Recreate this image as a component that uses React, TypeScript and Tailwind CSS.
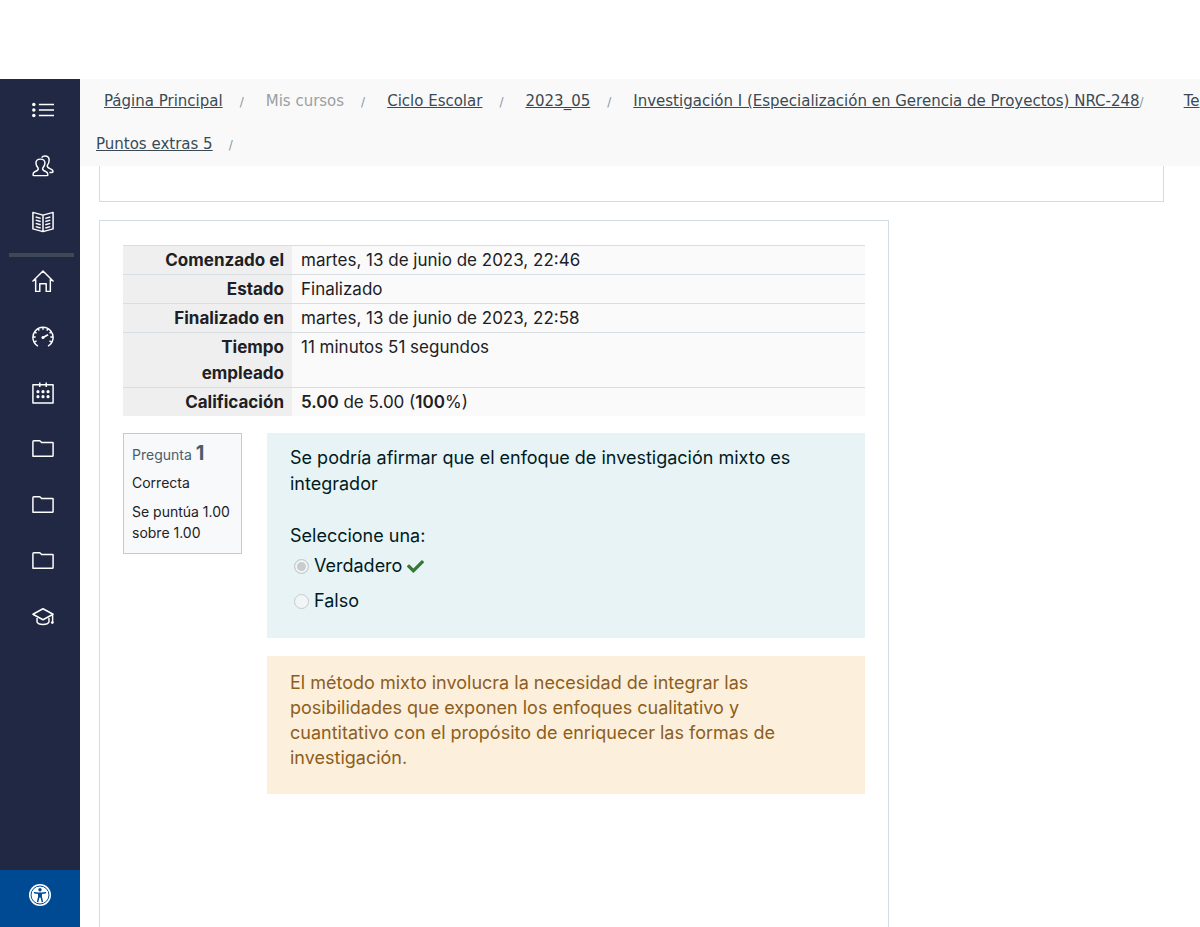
import type { ReactNode } from 'react';
import { FaCheck } from 'react-icons/fa';

interface NavItem {
  label: string;
  icon: ReactNode;
}

const folder = <path d="M1 20V4q0-1 1-1h6.500l2 2H22.500q.5 0 .5.500V19q0 1-1 1H2q-1 0-1-1Z" />;

const courseNav: NavItem[] = [
  {
    label: 'Secciones',
    icon: (
      <>
        <path d="M7.500 6H24M7.500 12H24M7.500 18H24" />
        <g fill="currentColor" stroke="none">
          <circle cx="2" cy="6" r="1.900" />
          <circle cx="2" cy="12" r="1.900" />
          <circle cx="2" cy="18" r="1.900" />
        </g>
      </>
    ),
  },
  {
    label: 'Participantes',
    icon: (
      <>
        <path d="M6.800 14.500C4.500 12 4.300 10.500 4.300 8.800C4.300 6 6.500 4.500 9.200 4.500S14.100 6 14.100 8.800C14.100 10.500 13.900 12 11.600 14.500C11.200 16.500 12.500 17 15 18C17 18.800 17.300 20 17.300 21.500Q17.300 22.500 16.300 22.500H2.100Q1.100 22.500 1.100 21.500C1.100 20 1.400 18.800 3.400 18C5.900 17 7.200 16.500 6.800 14.500Z" />
        <path d="M10.500 2.800C11.300 1.700 12.600 1.200 14 1.200C16.700 1.200 18.700 2.800 18.700 5.500C18.700 7.800 18.300 9.300 16.700 11.300C16.200 13.500 17.300 14 19.500 14.900C22 15.900 22.900 16.700 22.900 18Q22.900 19 21.900 19H19" />
      </>
    ),
  },
  {
    label: 'Calificaciones',
    icon: (
      <>
        <path d="M1 1.500L12 4.500L23 1.500V19.500L12 22.500L1 19.500ZM12 4.500V22.500" />
        <path d="M4 6.500L9.500 8M4 10L9.500 11.500M4 13.500L9.500 15M4 17L9.500 18.500M20 6.500L14.500 8M20 10L14.500 11.500M20 13.500L14.500 15M20 17L14.500 18.500" />
      </>
    ),
  },
];

const siteNav: NavItem[] = [
  {
    label: 'Página Principal',
    icon: <path d="M.5 12.500L12 1L23.500 12.500M4 10V23.500H8.500V15H15.500V23.500H20V10" />,
  },
  {
    label: 'Tablero',
    icon: (
      <>
        <path d="M6.500 22A11 11 0 1 1 17.500 22" />
        <path d="M12 1V4M6.500 2.500L7.800 5M17.500 2.500L16.200 5M2.500 6.500L5 7.800M21.500 6.500L19 7.800M1 12H4M23 12H20M2.500 17.500L5 16.200M21.500 17.500L19 16.200" />
        <path d="M12 12.500L17.500 9.500" strokeWidth="2" />
        <circle cx="12" cy="12.500" r="1.700" fill="currentColor" stroke="none" />
      </>
    ),
  },
  {
    label: 'Calendario',
    icon: (
      <>
        <path d="M1 3H23V23H1ZM8.500 .5V5.500M15.500 .5V5.500" />
        <g fill="currentColor" stroke="none">
          <circle cx="6.500" cy="10.500" r="1.700" />
          <circle cx="12" cy="10.500" r="1.700" />
          <circle cx="17.500" cy="10.500" r="1.700" />
          <circle cx="6.500" cy="16" r="1.700" />
          <circle cx="12" cy="16" r="1.700" />
          <circle cx="17.500" cy="16" r="1.700" />
        </g>
      </>
    ),
  },
  { label: 'Archivos privados', icon: folder },
  { label: 'Banco de contenido', icon: folder },
  { label: 'Documentos', icon: folder },
  {
    label: 'Mis cursos',
    icon: (
      <>
        <path d="M12 3L23 9L12 15L1 9ZM5.500 11.500V17.500C7 21 17 21 18.500 17.500V11.500M22.500 9.500V17.500" />
        <circle cx="22.200" cy="18" r="1.500" fill="currentColor" stroke="none" />
      </>
    ),
  },
];

const crumbs = [
  { label: 'Página Principal', href: '#inicio' },
  { label: 'Mis cursos' },
  { label: 'Ciclo Escolar', href: '#ciclo' },
  { label: '2023_05', href: '#periodo' },
  { label: 'Investigación I (Especialización en Gerencia de Proyectos) NRC-248', href: '#curso', tight: true },
];

const summary: { label: string; value: ReactNode }[] = [
  { label: 'Comenzado el', value: 'martes, 13 de junio de 2023, 22:46' },
  { label: 'Estado', value: 'Finalizado' },
  { label: 'Finalizado en', value: 'martes, 13 de junio de 2023, 22:58' },
  { label: 'Tiempo empleado', value: '11 minutos 51 segundos' },
  {
    label: 'Calificación',
    value: (
      <>
        <b className="font-semibold">5.00</b> de 5.00 (<b className="font-semibold">100</b>%)
      </>
    ),
  },
];

function NavList({ items }: { items: NavItem[] }) {
  return (
    <ul className="flex flex-col gap-[34px]">
      {items.map((item, i) => (
        <li key={i} className="flex justify-center pl-[6px]">
          <a href="#nav" aria-label={item.label} className="block text-white">
            <svg
              viewBox="0 0 24 24"
              className="w-[22px] h-[22px]"
              fill="none"
              stroke="currentColor"
              strokeWidth="1.600"
              strokeLinejoin="round"
            >
              {item.icon}
            </svg>
          </a>
        </li>
      ))}
    </ul>
  );
}

function Sidebar() {
  return (
    <aside className="w-20 shrink-0 bg-[#212844] flex flex-col justify-between">
      <nav className="pt-5">
        <NavList items={courseNav} />
        <hr className="mt-5 mb-[13px] ml-[9px] mr-[6px] h-1 border-0 bg-[#3b4a54]" />
        <NavList items={siteNav} />
      </nav>
      <button type="button" aria-label="Accesibilidad" className="h-[57px] pb-2 bg-[#004a93] flex items-center justify-center">
        <svg viewBox="0 0 24 24" className="w-6 h-6">
          <circle cx="12" cy="12" r="11" fill="#fff" />
          <circle cx="12" cy="12" r="9" fill="none" stroke="#004a93" strokeWidth="1" />
          <circle cx="12" cy="6.800" r="1.700" fill="#004a93" />
          <path
            d="M6.500 9.700L10.500 10.300H13.500L17.500 9.700M12 10V14M10.800 10.500V14L9.700 18.500M13.200 10.500V14L14.300 18.500"
            fill="none"
            stroke="#004a93"
            strokeWidth="1.500"
            strokeLinecap="round"
          />
        </svg>
      </button>
    </aside>
  );
}

function Slash() {
  return (
    <span aria-hidden="true" className="text-xs text-[#8b979e]">
      /
    </span>
  );
}

function Breadcrumb() {
  return (
    <nav
      aria-label="Ruta"
      className="bg-[#f9f9f9] pt-[9px] pb-[9px] overflow-hidden whitespace-nowrap font-['DejaVu_Sans',Verdana,sans-serif] text-[15px] leading-[26px] text-[#3a4a54]"
    >
      <ol className="flex items-baseline pl-6">
        {crumbs.map((crumb) => (
          <li key={crumb.label} className={crumb.tight ? 'flex items-baseline pr-10' : 'flex items-baseline gap-[17px] pr-[22px]'}>
            {crumb.href ? (
              <a href={crumb.href} className="underline">
                {crumb.label}
              </a>
            ) : (
              <span className="text-[#9b9fa2]">{crumb.label}</span>
            )}
            <Slash />
          </li>
        ))}
        <li>
          <a href="#tema" className="underline">
            Te
          </a>
        </li>
      </ol>
      <div className="flex items-baseline gap-4 pl-4 mt-[17px]">
        <a href="#puntos" className="underline">
          Puntos extras 5
        </a>
        <Slash />
      </div>
    </nav>
  );
}

function AttemptSummary() {
  return (
    <table className="w-full bg-[#fafafa] leading-[26px]">
      <tbody>
        {summary.map((row) => (
          <tr key={row.label} className="border-t border-[#d9dee3] align-top">
            <th scope="row" className="w-[169px] bg-[#efefef] pl-8 pr-2 py-px text-right font-bold">
              {row.label}
            </th>
            <td className="px-[9px] py-px">{row.value}</td>
          </tr>
        ))}
      </tbody>
    </table>
  );
}

function QuestionInfo() {
  return (
    <div className="w-[119px] shrink-0 self-start border border-[#c3cad2] bg-[#f8f9fb] px-2 pt-[5px] pb-[10px] text-sm leading-[21px]">
      <h3 className="text-[#495e6a] leading-[26px]">
        Pregunta <span className="text-xl font-bold">1</span>
      </h3>
      <div className="mt-1">Correcta</div>
      <div className="mt-2">Se puntúa 1.00 sobre 1.00</div>
    </div>
  );
}

function Option({ label, checked = false }: { label: string; checked?: boolean }) {
  return (
    <label className="flex items-center gap-[5px] pl-1">
      <input
        type="radio"
        name="respuesta"
        disabled
        defaultChecked={checked}
        className="appearance-none w-[15px] h-[15px] rounded-full border border-[#c6cacb] bg-[#f1f5f5] checked:bg-[#c9cccd] checked:shadow-[inset_0_0_0_2px_#f1f5f5]"
      />
      {label}
      {checked && <FaCheck size={17} className="text-[#357a32]" />}
    </label>
  );
}

export default function App() {
  return (
    <div className="min-h-screen bg-white pt-[79px] flex flex-col font-['Inter',sans-serif] text-[17px] text-[#1d2125]">
      <div className="flex-1 flex">
        <Sidebar />
        <main className="flex-1 min-w-0 flex flex-col">
          <Breadcrumb />
          <div className="ml-[19px] mr-9 h-9 border border-t-0 border-[#d5dce1]" />
          <section className="flex-1 mt-[18px] ml-[19px] mr-[311px] border border-b-0 border-[#d5dce1] px-[23px] pt-6">
            <AttemptSummary />
            <div className="flex gap-[25px] mt-[17px]">
              <QuestionInfo />
              <div className="flex-1 flex flex-col gap-[18px] text-lg">
                <div className="bg-[#e7f3f5] text-[#001a1e] px-[23px] pt-3 pb-6 leading-[26px]">
                  <p>Se podría afirmar que el enfoque de investigación mixto es integrador</p>
                  <fieldset className="mt-[26px]">
                    <legend>Seleccione una:</legend>
                    <div className="flex flex-col gap-[9px] mt-1">
                      <Option label="Verdadero" checked />
                      <Option label="Falso" />
                    </div>
                  </fieldset>
                </div>
                <div className="bg-[#fcefdc] text-[#8c5e1c] pl-[23px] pr-16 pt-[14px] pb-6 leading-[25px]">
                  El método mixto involucra la necesidad de integrar las posibilidades que exponen los enfoques cualitativo y
                  cuantitativo con el propósito de enriquecer las formas de investigación.
                </div>
              </div>
            </div>
          </section>
        </main>
      </div>
    </div>
  );
}
